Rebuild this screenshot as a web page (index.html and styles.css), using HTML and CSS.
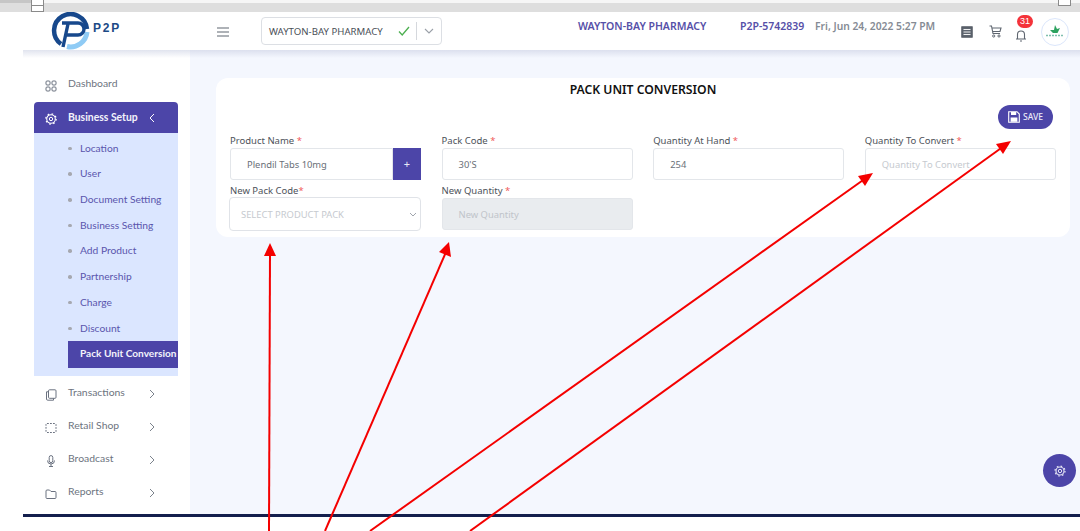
FILE: index.html
```html
<!DOCTYPE html>
<html lang="en">
<head>
<meta charset="utf-8">
<title>Pack Unit Conversion</title>
<link rel="stylesheet" href="styles.css">
</head>
<body>
<div class="screen">
  <div class="ruler"><span class="ruler-dark"></span></div>
  <span class="handle handle-left"></span>
  <span class="handle handle-right"></span>

  <header class="topbar">
    <div class="logo">
      <svg class="logo-mark" viewBox="0 0 40 38" width="40" height="38">
        <path d="M36 20 A16.500 16.500 0 0 1 16 34.500" fill="none" stroke="#8fcbf5" stroke-width="5"/>
        <path d="M10 32 A16.500 16.500 0 1 1 36 17" fill="none" stroke="#17488c" stroke-width="4.500"/>
        <path d="M11 11 H27 A6 6 0 0 1 27 23 H15 M12 35 L17 12" fill="none" stroke="#17488c" stroke-width="3.400"/>
      </svg>
      <span class="logo-text">P2P</span>
    </div>
    <svg class="burger" viewBox="0 0 12 10" width="12" height="10"><path d="M0 1H12M0 5H12M0 9H12" stroke="#5f6670" stroke-width="1.200"/></svg>
    <div class="store-select">
      <span class="store-name">WAYTON-BAY PHARMACY</span>
      <svg class="store-check" viewBox="0 0 12 10" width="12" height="10"><path d="M1 5.500L4.200 9L11 1" fill="none" stroke="#4caf50" stroke-width="1.300"/></svg>
      <span class="store-divider"></span>
      <svg class="store-chevron" viewBox="0 0 10 6" width="10" height="6"><path d="M1 1L5 5L9 1" fill="none" stroke="#9aa0a8" stroke-width="1.100"/></svg>
    </div>
    <span class="head-store">WAYTON-BAY PHARMACY</span>
    <span class="head-code">P2P-5742839</span>
    <span class="head-date">Fri, Jun 24, 2022 5:27 PM</span>
    <svg class="head-icon list-icon" viewBox="0 0 12 12" width="12" height="12"><rect x="0.800" y="0.800" width="10.400" height="10.400" fill="#5f6670" stroke="#4f5660"/><path d="M2.500 3.500H9.500M2.500 6H9.500M2.500 8.500H9.500" stroke="#fff" stroke-width="0.900"/></svg>
    <svg class="head-icon cart-icon" viewBox="0 0 13 13" width="13" height="13"><path d="M0.500 1H2.500L4 8.500H11M3 3H12L11 6.500H3.600" fill="none" stroke="#5f6670" stroke-width="1.100"/><circle cx="4.700" cy="11" r="1.100" fill="none" stroke="#5f6670"/><circle cx="10" cy="11" r="1.100" fill="none" stroke="#5f6670"/></svg>
    <div class="bell">
      <svg viewBox="0 0 12 13" width="12" height="13"><path d="M2.500 10V5.500A3.500 3.500 0 0 1 9.500 5.500V10M1 10H11M5 12H7" fill="none" stroke="#5f6670" stroke-width="1.100"/></svg>
      <span class="badge">31</span>
    </div>
    <div class="avatar">
      <svg viewBox="0 0 22 14" width="22" height="14"><path d="M11 0L13 4L16 3L13.500 8H9L6 5L10 5Z" fill="#2ca25f"/><path d="M2 10.500H20" stroke="#7fbfae" stroke-width="1.600" stroke-dasharray="2 1"/></svg>
    </div>
  </header>

  <div class="body-row">
    <aside class="sidebar">
      <a class="nav-row nav-first">
        <svg class="nav-icon" viewBox="0 0 12 12" width="12" height="12"><g fill="none" stroke="#6b7280"><rect x="1" y="1" width="4" height="4" rx="1"/><rect x="7" y="1" width="4" height="4" rx="1"/><rect x="1" y="7" width="4" height="4" rx="1"/><rect x="7" y="7" width="4" height="4" rx="1"/></g></svg>
        <span class="nav-label">Dashboard</span>
      </a>
      <a class="nav-active">
        <svg class="nav-icon" viewBox="0 0 12 12" width="12" height="12"><circle cx="6" cy="6" r="1.700" fill="none" stroke="#fff"/><circle cx="6" cy="6" r="4.300" fill="none" stroke="#fff" stroke-width="1.100"/><circle cx="6" cy="6" r="5.200" fill="none" stroke="#fff" stroke-width="1.200" stroke-dasharray="1.600 2.480"/></svg>
        <span class="nav-label">Business Setup</span>
        <svg class="nav-chevron" viewBox="0 0 6 10" width="6" height="10"><path d="M5 1L1 5L5 9" fill="none" stroke="#fff"/></svg>
      </a>
      <ul class="submenu">
        <li class="sub-item">Location</li>
        <li class="sub-item">User</li>
        <li class="sub-item">Document Setting</li>
        <li class="sub-item">Business Setting</li>
        <li class="sub-item">Add Product</li>
        <li class="sub-item">Partnership</li>
        <li class="sub-item">Charge</li>
        <li class="sub-item">Discount</li>
        <li class="sub-current">Pack Unit Conversion</li>
      </ul>
      <a class="nav-row nav-after">
        <svg class="nav-icon" viewBox="0 0 12 12" width="12" height="12"><g fill="none" stroke="#6b7280"><rect x="3.500" y="0.800" width="7.500" height="8.500" rx="1"/><path d="M3.500 2.800H1.500V10A1.200 1.200 0 0 0 2.700 11.200H8.500V9.300"/></g></svg>
        <span class="nav-label">Transactions</span>
        <svg class="nav-chevron" viewBox="0 0 6 10" width="6" height="10"><path d="M1 1L5 5L1 9" fill="none" stroke="#7b828c"/></svg>
      </a>
      <a class="nav-row">
        <svg class="nav-icon" viewBox="0 0 12 12" width="12" height="12"><rect x="1" y="1.500" width="10" height="9" rx="1" fill="none" stroke="#6b7280" stroke-dasharray="1.800 1.200"/></svg>
        <span class="nav-label">Retail Shop</span>
        <svg class="nav-chevron" viewBox="0 0 6 10" width="6" height="10"><path d="M1 1L5 5L1 9" fill="none" stroke="#7b828c"/></svg>
      </a>
      <a class="nav-row">
        <svg class="nav-icon" viewBox="0 0 12 12" width="12" height="12"><g fill="none" stroke="#6b7280"><rect x="4.200" y="0.600" width="3.600" height="7" rx="1.800"/><path d="M2.500 5.500A3.500 3.500 0 0 0 9.500 5.500M6 9V11.500M4 11.500H8"/></g></svg>
        <span class="nav-label">Broadcast</span>
        <svg class="nav-chevron" viewBox="0 0 6 10" width="6" height="10"><path d="M1 1L5 5L1 9" fill="none" stroke="#7b828c"/></svg>
      </a>
      <a class="nav-row">
        <svg class="nav-icon" viewBox="0 0 12 12" width="12" height="12"><path d="M1 3A1 1 0 0 1 2 2H4.500L6 3.500H10A1 1 0 0 1 11 4.500V9.500A1 1 0 0 1 10 10.500H2A1 1 0 0 1 1 9.500Z" fill="none" stroke="#6b7280"/></svg>
        <span class="nav-label">Reports</span>
        <svg class="nav-chevron" viewBox="0 0 6 10" width="6" height="10"><path d="M1 1L5 5L1 9" fill="none" stroke="#7b828c"/></svg>
      </a>
    </aside>

    <main class="content">
      <section class="card">
        <h1 class="card-title">PACK UNIT CONVERSION</h1>
        <div class="card-actions">
          <button class="save-btn" type="button">
            <svg viewBox="0 0 12 12" width="12" height="12"><path d="M0.700 0.700H9L11.300 3V11.300H0.700Z" fill="none" stroke="#fff" stroke-width="1.100"/><rect x="3" y="1" width="5.200" height="3" fill="#fff"/><rect x="2.600" y="6.500" width="6.800" height="4.300" fill="#fff"/></svg>
            <span>SAVE</span>
          </button>
        </div>
        <div class="form-grid">
          <div class="field">
            <label class="field-label">Product Name <em class="req">*</em></label>
            <div class="input-group">
              <div class="input input-joined">Plendil Tabs 10mg</div>
              <span class="add-btn">+</span>
            </div>
          </div>
          <div class="field">
            <label class="field-label">Pack Code <em class="req">*</em></label>
            <div class="input">30'S</div>
          </div>
          <div class="field">
            <label class="field-label">Quantity At Hand <em class="req">*</em></label>
            <div class="input">254</div>
          </div>
          <div class="field">
            <label class="field-label">Quantity To Convert <em class="req">*</em></label>
            <div class="input input-empty">Quantity To Convert</div>
          </div>
          <div class="field">
            <label class="field-label">New Pack Code<em class="req">*</em></label>
            <div class="select">
              <span>SELECT PRODUCT PACK</span>
              <svg viewBox="0 0 8 5" width="8" height="5"><path d="M1 1L4 4L7 1" fill="none" stroke="#a0a5ad"/></svg>
            </div>
          </div>
          <div class="field">
            <label class="field-label">New Quantity <em class="req">*</em></label>
            <div class="input input-disabled">New Quantity</div>
          </div>
        </div>
      </section>
    </main>
  </div>

  <div class="footer-line"></div>

  <span class="fab">
    <svg viewBox="0 0 12 12" width="12" height="12"><circle cx="6" cy="6" r="1.700" fill="none" stroke="#e6e6f5"/><circle cx="6" cy="6" r="4" fill="none" stroke="#e6e6f5" stroke-width="1.100"/><circle cx="6" cy="6" r="5" fill="none" stroke="#e6e6f5" stroke-width="1.200" stroke-dasharray="1.600 2.330"/></svg>
  </span>

  <svg class="arrows" viewBox="0 0 1080 531" width="1080" height="531">
    <g stroke="#f40000" stroke-width="2" fill="none">
      <path d="M269 531L270 252"/>
      <path d="M325 531L446 252"/>
      <path d="M370 531L866 178"/>
      <path d="M470 531L1004 146"/>
    </g>
    <g fill="#f40000">
      <path d="M270 243L276 256H264Z"/>
      <path d="M449 242L451 257L439 252Z"/>
      <path d="M873 173L865 186L858 176Z"/>
      <path d="M1011 141L1003 154L996 144Z"/>
    </g>
  </svg>
</div>
</body>
</html>
```
FILE: styles.css
```css
* { box-sizing: border-box; }
html, body { margin: 0; padding: 0; background: #fff; }
.screen {
  position: relative;
  display: flex;
  flex-direction: column;
  width: 1080px;
  height: 531px;
  overflow: hidden;
  background: #fff;
  font-family: "Noto Sans", sans-serif;
}
.ruler {
  flex: 0 0 12px;
  background: #dedede;
  border-top: 3px solid #f6f6f6;
  position: relative;
}
.ruler-dark {
  position: absolute;
  left: 0;
  top: -3px;
  width: 31px;
  height: 3px;
  background: #c6c6c6;
}
.handle {
  position: absolute;
  top: -1px;
  width: 13px;
  background: #fff;
  border: 1px solid #8a8a8a;
}
.handle-left {
  left: 31px;
  height: 13px;
  background: linear-gradient(#fff 5px, #8a8a8a 5px, #8a8a8a 6px, #fff 6px);
}
.handle-right { left: 1058px; height: 7px; }

.topbar {
  flex: 0 0 38px;
  display: flex;
  align-items: center;
  position: relative;
  z-index: 2;
  background: #fff;
}
.topbar::after {
  content: "";
  position: absolute;
  left: 23px;
  right: 0;
  top: 100%;
  height: 8px;
  background: linear-gradient(rgba(200, 205, 225, .55), rgba(200, 205, 225, 0));
}
.logo { display: flex; align-items: flex-start; margin-left: 51px; width: 166px; height: 38px; }
.logo-mark { flex: none; }
.logo-text {
  margin: 10px 0 0 2px;
  font: 700 12px/12px "Liberation Sans", sans-serif;
  letter-spacing: 1.800px;
  color: #1c4a86;
}
.burger { flex: none; margin-top: 1px; }
.store-select {
  display: flex;
  align-items: center;
  width: 181px;
  height: 28px;
  margin: 0 0 0 32px;
  padding-left: 7px;
  border: 1px solid #dcdfe4;
  border-radius: 4px;
}
.store-name { width: 129px; font-size: 9.650px; color: #4a4f57; white-space: nowrap; }
.store-check { flex: none; }
.store-divider { width: 1px; height: 18px; margin-left: 6px; background: #d5d8dd; }
.store-chevron { margin-left: 7px; }
.head-store, .head-code, .head-date { margin-top: -10px; font-size: 10.500px; font-weight: 600; white-space: nowrap; }
.head-store { margin-left: 136px; width: 162px; color: #5650a8; }
.head-code { width: 75px; color: #5650a8; }
.head-date { width: 146px; font-size: 10.300px; color: #858b94; }
.head-icon { flex: none; margin-top: 1px; }
.list-icon { margin-right: 16px; }
.cart-icon { margin-right: 13px; }
.bell { position: relative; width: 12px; height: 13px; margin-top: 1px; }
.badge {
  position: absolute;
  left: 2px;
  top: -10px;
  width: 16px;
  height: 13px;
  border-radius: 7px;
  background: #f4333a;
  color: #fff;
  font: 9px/13px "Liberation Sans", sans-serif;
  text-align: center;
}
.avatar {
  display: flex;
  align-items: center;
  justify-content: center;
  width: 28px;
  height: 28px;
  margin: 1px 0 0 14px;
  border: 1px solid #dbe6fb;
  border-radius: 50%;
  background: #fff;
}

.body-row { flex: 0 0 464px; display: flex; padding-left: 23px; }
.sidebar {
  flex: 0 0 167px;
  min-width: 0;
  padding: 18px 12px 0 11px;
  background: #fff;
  font-family: Lato, sans-serif;
  font-size: 10.400px;
}
.nav-row, .nav-active {
  display: flex;
  align-items: center;
  position: relative;
  padding-left: 11px;
}
.nav-row { height: 33px; color: #6d7480; }
.nav-first { margin-bottom: 1px; }
.nav-after { margin-top: 1.500px; }
.nav-active {
  height: 31px;
  border-radius: 4px 4px 0 0;
  background: #4c45a8;
  color: #f3f3fb;
  font-weight: 700;
}
.nav-icon { flex: none; margin: 2px 11px 0 0; }
.nav-label { width: 78px; white-space: nowrap; }
.nav-active .nav-label { margin-top: -2px; }
.nav-row .nav-label { margin-top: -4px; }
.nav-chevron { flex: none; margin-left: 3px; }
.submenu {
  list-style: none;
  margin: 0;
  padding: 2.700px 0 7.500px 34px;
  background: #dbe6ff;
}
.sub-item {
  position: relative;
  height: 25.700px;
  padding-left: 12px;
  line-height: 25.700px;
  font-size: 10.250px;
  color: #5a55ad;
}
.sub-item::before {
  content: "";
  position: absolute;
  left: 0;
  top: 11px;
  width: 3.500px;
  height: 3.500px;
  border-radius: 50%;
  background: #a6a8b0;
}
.sub-current {
  height: 27px;
  padding-left: 12px;
  line-height: 25px;
  background: #4c45a8;
  color: #f3f3fb;
  font-size: 10.100px;
  font-weight: 700;
  white-space: nowrap;
  overflow: hidden;
}

.content { flex: 1; min-width: 0; padding: 28px 10px 0 26px; background: #f4f7fe; }
.card {
  position: relative;
  height: 159px;
  padding: 0 14px;
  border-radius: 12px;
  background: #fff;
}
.card-title {
  margin: 0;
  padding-top: 4px;
  font-size: 12.200px;
  line-height: 16px;
  font-weight: 600;
  color: #111;
  text-align: center;
}
.card-actions { display: flex; justify-content: flex-end; height: 35px; padding: 7px 3px 0 0; }
.save-btn {
  display: flex;
  align-items: center;
  justify-content: center;
  gap: 3px;
  width: 55px;
  height: 24px;
  padding: 0;
  border: 0;
  border-radius: 12px;
  background: #4c45a8;
  color: #e9e9f7;
  font: 500 8.600px "Noto Sans", sans-serif;
}
.form-grid {
  display: grid;
  grid-template-columns: repeat(4, 191px);
  column-gap: 20.600px;
}
.field { display: flex; flex-direction: column; height: 50px; }
.field-label { height: 15px; font-size: 9.500px; line-height: 16px; color: #4d525a; white-space: nowrap; }
.req { color: #f05a5a; font-style: normal; }
.input {
  height: 32px;
  padding-left: 16px;
  border: 1px solid #e3e6ea;
  border-radius: 3px;
  background: #fff;
  font-size: 9.400px;
  line-height: 31px;
  color: #6a7078;
}
.input-group { display: flex; }
.input-joined { flex: 1; border-radius: 3px 0 0 3px; }
.add-btn {
  flex: 0 0 28px;
  height: 32px;
  background: #4c45a8;
  color: #e9e9f7;
  font-size: 11px;
  line-height: 31px;
  text-align: center;
}
.input-empty { color: #c6cacf; }
.input-disabled { background: #e9ecef; color: #c0c4ca; }
.select {
  display: flex;
  align-items: center;
  justify-content: space-between;
  height: 34px;
  margin: -1px 0 0 -1px;
  padding: 0 3px 0 11px;
  border: 1px solid #e0e3e8;
  border-radius: 4px;
  background: #fff;
  color: #c6cacf;
  font-size: 9.400px;
}

.footer-line { flex: 0 0 3px; margin-left: 23px; background: #141f4d; }
.fab {
  position: absolute;
  left: 1043px;
  top: 454px;
  display: flex;
  align-items: center;
  justify-content: center;
  width: 33px;
  height: 33px;
  border-radius: 50%;
  background: #4c45a8;
}
.arrows { position: absolute; left: 0; top: 0; pointer-events: none; z-index: 5; }
```
